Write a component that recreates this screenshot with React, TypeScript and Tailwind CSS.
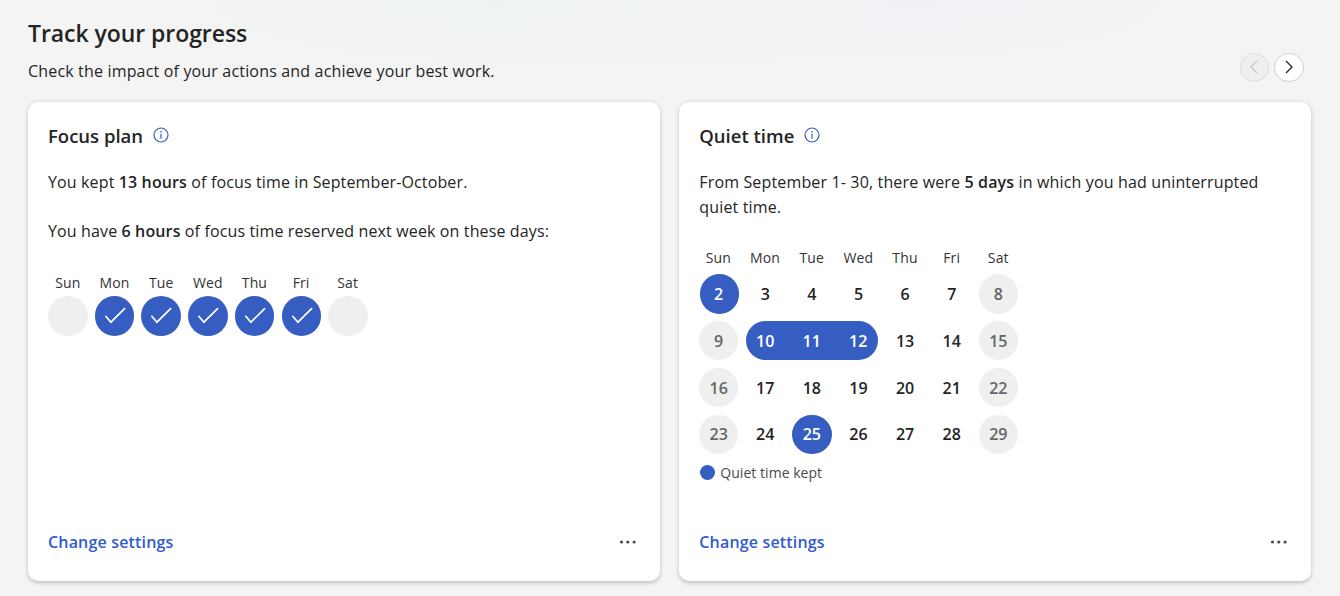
import type { ReactNode } from "react";

const DAYS = ["Sun", "Mon", "Tue", "Wed", "Thu", "Fri", "Sat"];

function InfoIcon() {
  return (
    <svg className="h-4 w-4 text-[#365dc1]" viewBox="0 0 16 16" fill="none" stroke="currentColor">
      <circle cx="8" cy="8" r="7" strokeWidth="1.15" />
      <path d="M8 7.2v4.1" strokeWidth="1.15" strokeLinecap="round" />
      <circle cx="8" cy="4.9" r="0.8" fill="currentColor" stroke="none" />
    </svg>
  );
}

function Check() {
  return (
    <svg className="h-[39px] w-[39px]" viewBox="0 0 39 39" fill="none">
      <path d="M10.8 20.3 15.9 26.2 29.6 12.6" stroke="white" strokeWidth="1.7" strokeLinecap="round" />
    </svg>
  );
}

function Weekdays() {
  return (
    <div className="grid h-5 w-[326.5px] grid-cols-7 text-sm leading-5 text-[#333]">
      {DAYS.map((d) => (
        <span key={d} className="w-[39px] text-center whitespace-nowrap">{d}</span>
      ))}
    </div>
  );
}

function Card({ title, children }: { title: string; children: ReactNode }) {
  return (
    <section className="flex h-[479px] flex-col rounded-[10px] bg-white px-5 pt-[18px] shadow-[0_1.5px_4px_rgba(0,0,0,0.22)]">
      <div className="flex h-8 items-center gap-[10px]">
        <h2 className="text-[18.5px] font-semibold whitespace-nowrap">{title}</h2>
        <span className="-mt-[3px]"><InfoIcon /></span>
      </div>
      <div className="flex-1 pt-[18px] text-base leading-[24.6px] tracking-[0.13px]">{children}</div>
      <div className="flex h-[51px] items-start justify-between">
        <a href="#" className="text-base leading-6 font-semibold tracking-[0.17px] text-[#2f5bcd]">Change settings</a>
        <svg className="mt-[7.5px] mr-[3px] h-2 w-[18px]" viewBox="0 0 18 8" fill="#4d4d4d">
          <circle cx="2.5" cy="4" r="1.6" />
          <circle cx="8.8" cy="4" r="1.6" />
          <circle cx="15.1" cy="4" r="1.6" />
        </svg>
      </div>
    </section>
  );
}

function DayCell({ day }: { day: number }) {
  const kept = day === 2 || day === 25;
  const weekend = day % 7 === 1 || day % 7 === 2;
  const tone = kept
    ? "bg-[#365dc1] text-white"
    : weekend
      ? "bg-[#efefef] text-[#666]"
      : "text-[#242424]";
  const inset = day === 2 ? "ml-px pr-[2px]" : "";
  return (
    <span className={`flex h-[39.5px] w-[39.5px] items-center justify-center rounded-full ${tone} ${inset}`}>{day}</span>
  );
}

const WEEKS = [2, 9, 16, 23];

export default function App() {
  return (
    <main className="h-[596px] w-[1340px] overflow-hidden bg-[#f4f4f4] bg-[radial-gradient(ellipse_420px_90px_at_500px_0px,#eef3f1,transparent),radial-gradient(ellipse_500px_110px_at_900px_0px,#f3f0f5,transparent)] px-7 font-['Open_Sans','Segoe_UI',sans-serif] text-[#242424]">
      <header className="flex h-[102px] justify-between">
        <div className="pt-[15px]">
          <h1 className="text-[23px] leading-9 font-semibold tracking-[-0.06px]">Track your progress</h1>
          <p className="mt-2 text-base leading-6 tracking-[0.17px]">Check the impact of your actions and achieve your best work.</p>
        </div>
        <div className="mr-[8.5px] flex gap-[5px] pt-[52.5px]">
          <button className="flex h-[29.5px] w-[29.5px] items-center justify-center rounded-full border border-[#dcdcdc] bg-[#efefef]">
            <svg className="h-[14px] w-2" viewBox="0 0 8 14" fill="none" stroke="#c3c3c3" strokeWidth="1.2"><path d="M7 1 1 7l6 6" /></svg>
          </button>
          <button className="flex h-[29.5px] w-[29.5px] items-center justify-center rounded-full border border-[#cfcfcf] bg-white">
            <svg className="h-[14px] w-2" viewBox="0 0 8 14" fill="none" stroke="#242424" strokeWidth="1.3"><path d="M1 1 7 7l-6 6" /></svg>
          </button>
        </div>
      </header>
      <div className="grid grid-cols-[632px_632px] gap-[19.3px]">
        <Card title="Focus plan">
          <p>You kept <b className="font-semibold">13 hours</b> of focus time in September-October.</p>
          <p className="mt-[24.6px]">You have <b className="font-semibold">6 hours</b> of focus time reserved next week on these days:</p>
          <div className="mt-[29.2px] pl-[0.4px]"><Weekdays /></div>
          <div className="mt-[3.4px] grid w-[327px] grid-cols-7">
            {DAYS.map((d, i) => (
              <span key={d} className={`block h-[39.5px] w-[39.5px] rounded-full ${i > 0 && i < 6 ? "bg-[#365dc1]" : "bg-[#efefef]"}`}>
                {i > 0 && i < 6 && <Check />}
              </span>
            ))}
          </div>
        </Card>
        <Card title="Quiet time">
          <p className="tracking-[0.15px]">From September 1- 30, there were <b className="font-semibold">5 days</b> in which you had uninterrupted<br />quiet time.</p>
          <div className="mt-[29px] -ml-[0.4px]"><Weekdays /></div>
          <div className="mt-[6px] -ml-[0.4px] grid w-[326.3px] grid-cols-7 gap-y-[7.3px] text-base font-semibold tracking-normal">
            {WEEKS.flatMap((start) =>
              start === 9
                ? [
                    <DayCell key={9} day={9} />,
                    <div key="run" className="col-span-3 flex h-[39.5px] w-[132.5px] items-center rounded-full bg-[#365dc1] text-center text-white">
                      <span className="w-[39.5px]">10</span>
                      <span className="ml-[7px] w-[39.5px]">11</span>
                      <span className="ml-[7px] w-[39.5px]">12</span>
                    </div>,
                    ...[13, 14, 15].map((d) => <DayCell key={d} day={d} />),
                  ]
                : DAYS.map((_, i) => <DayCell key={start + i} day={start + i} />)
            )}
          </div>
          <div className="mt-[7px] flex items-center gap-[5px] text-[14px] tracking-[0.04px] text-[#4a4a4a]">
            <span className="-mt-[2px] ml-[1px] h-[15px] w-[15px] rounded-full bg-[#365dc1]" />
            Quiet time kept
          </div>
        </Card>
      </div>
    </main>
  );
}
